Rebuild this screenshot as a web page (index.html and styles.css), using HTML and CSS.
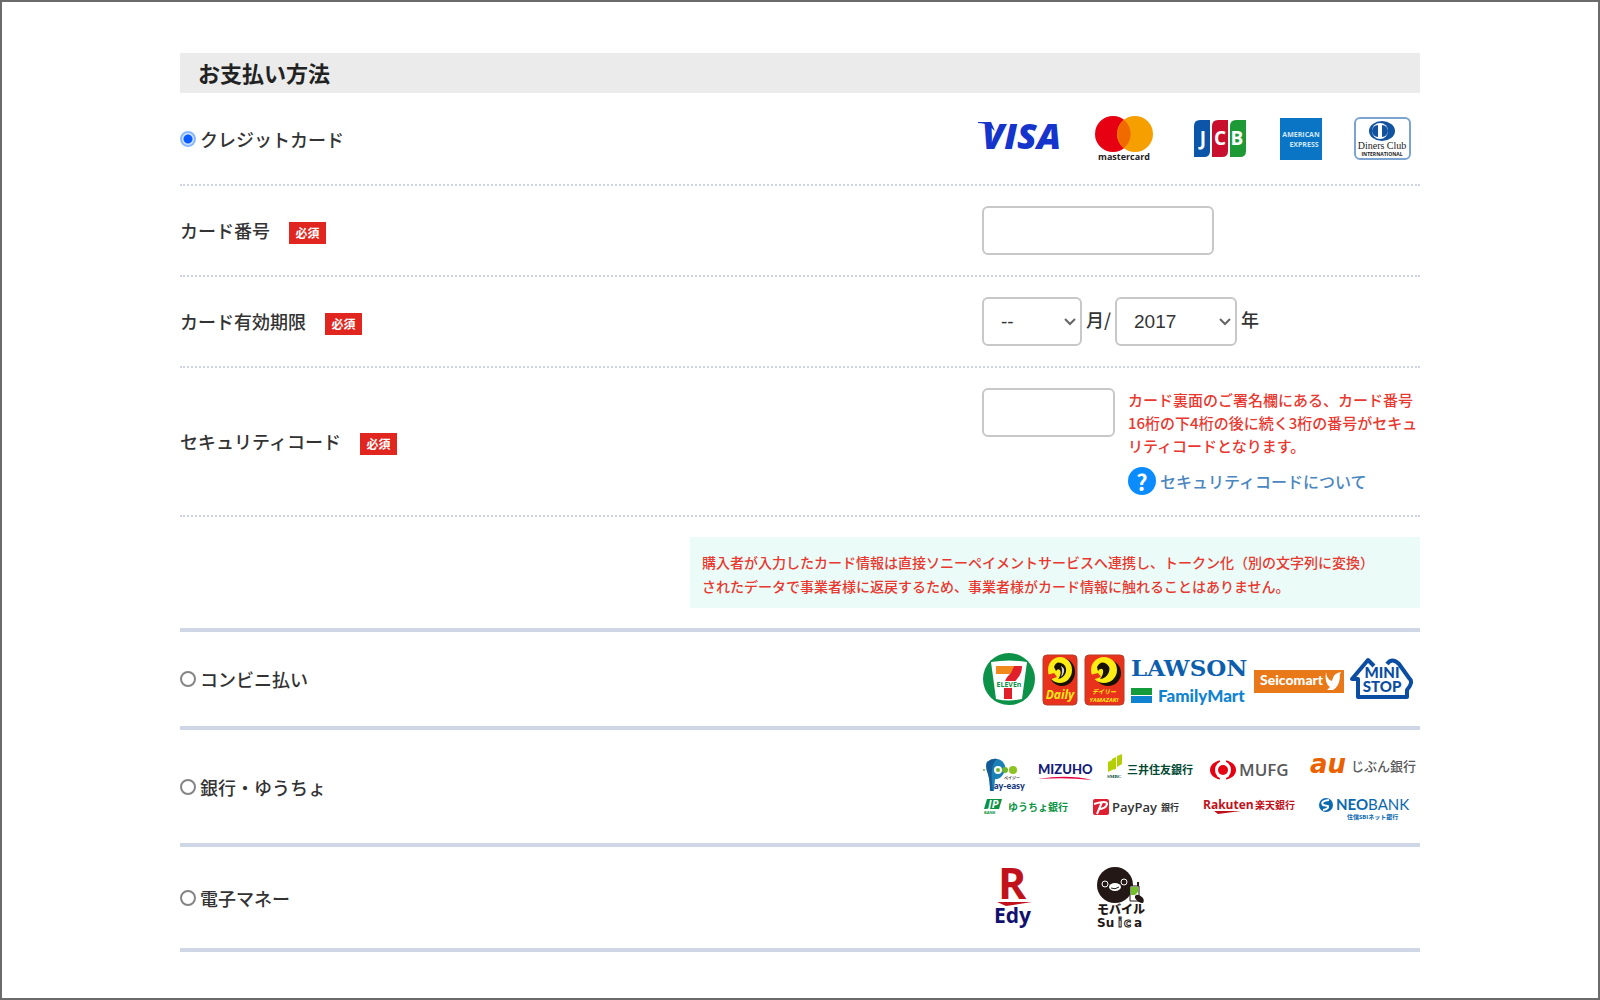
FILE: index.html
```html
<!DOCTYPE html>
<html lang="ja">
<head>
  <meta charset="UTF-8" />
  <meta name="viewport" content="width=device-width, initial-scale=1.0"/>
  <title>お支払い方法</title>
  <link rel="stylesheet" href="styles.css">
</head>
<body>

<form class="payment">
  <h1>お支払い方法</h1>

  <div class="row card-row">
    <label class="method"><input type="radio" name="method" value="card" checked />クレジットカード</label>
    <div class="field logos cards">
      <svg width="86" height="47" role="img" aria-label="VISA">
        <text x="5" y="34" class="visa">VISA</text>
        <path d="M1 7h13l4 9-6-5Q8 8 1 8z" fill="#1434cb"/>
      </svg>
      <svg width="67" height="47" role="img" aria-label="mastercard">
        <circle cx="18" cy="19" r="18" fill="#e60012"/>
        <circle cx="40" cy="19" r="18" fill="#f5a000"/>
        <path d="M29 5a18 18 0 0 1 0 28 18 18 0 0 1 0-28z" fill="#f06a00"/>
        <text x="29" y="45" class="mc">mastercard</text>
      </svg>
      <svg width="54" height="47" role="img" aria-label="JCB">
        <path d="M6 5h10v31q0 6-6 6H0V11q0-6 6-6z" fill="#0b56a8"/>
        <path d="M24 5h10v31q0 6-6 6H18V11q0-6 6-6z" fill="#c8102e"/>
        <path d="M42 5h10v31q0 6-6 6H36V11q0-6 6-6z" fill="#1d9a35"/>
        <text x="9" y="30" class="jcb">J</text>
        <text x="26" y="30" class="jcb">C</text>
        <text x="43" y="30" class="jcb">B</text>
      </svg>
      <svg width="42" height="47" role="img" aria-label="American Express">
        <path d="M0 3h42v42H0z" fill="#0a75c4"/>
        <text x="21" y="22" class="amex">AMERICAN</text>
        <text x="24" y="32" class="amex">EXPRESS</text>
      </svg>
      <svg width="58" height="47" role="img" aria-label="Diners Club International">
        <rect x="1" y="3" width="55" height="41" rx="5" fill="#fff" stroke="#7ba4d0" stroke-width="2"/>
        <ellipse cx="28" cy="16" rx="13" ry="10" fill="#12539f"/>
        <circle cx="26" cy="16" r="8" fill="#fff"/>
        <path d="M24 10v12a6 6 0 0 1 0-12zM28 10v12a6 6 0 0 0 0-12z" fill="#12539f"/>
        <text x="28" y="34" class="diners">Diners Club</text>
        <text x="28" y="41" class="diners-sub">INTERNATIONAL</text>
      </svg>
    </div>
  </div>

  <div class="row">
    <div class="name"><label for="cardNumber">カード番号</label><span class="required">必須</span></div>
    <div class="field"><input type="text" class="box number" id="cardNumber" /></div>
  </div>

  <div class="row">
    <div class="name"><label for="month">カード有効期限</label><span class="required">必須</span></div>
    <div class="field expiry">
      <select class="box month" id="month"><option>--</option></select>
      <span>月/</span>
      <select class="box year" id="year" aria-label="年"><option>2017</option></select>
      <span>年</span>
    </div>
  </div>

  <div class="row">
    <div class="name"><label for="code">セキュリティコード</label><span class="required">必須</span></div>
    <div class="field security">
      <input type="text" class="box code" id="code" />
      <div class="note">
        <p>カード裏面のご署名欄にある、カード番号<br>16桁の下4桁の後に続く3桁の番号がセキュ<br>リティコードとなります。</p>
        <a href="#"><span class="help">?</span>セキュリティコードについて</a>
      </div>
    </div>
  </div>

  <div class="row last notice-row">
    <p class="notice">購入者が入力したカード情報は直接ソニーペイメントサービスへ連携し、トークン化（別の文字列に変換）<br>されたデータで事業者様に返戻するため、事業者様がカード情報に触れることはありません。</p>
  </div>

  <div class="row last">
    <label class="method"><input type="radio" name="method" value="cvs" />コンビニ払い</label>
    <div class="field logos stores">
      <svg width="54" height="54" role="img" aria-label="7-ELEVEN">
        <circle cx="27" cy="27" r="26" fill="#0c9149"/>
        <path d="M9 10q18-3 36 0l-5 37q-13 3-26 0z" fill="#fff"/>
        <path d="M14 14h18l-2 8H14z" fill="#f08a1c"/>
        <path d="M32 14h8q0 8-5 13-4 5-5 7v13h-8V34q0-7 7-13z" fill="#e2202c"/>
        <path d="M13 29h28v7H13z" fill="#fff"/>
        <text x="27" y="35" class="seven">ELEVEn</text>
      </svg>
      <svg width="36" height="54" role="img" aria-label="Daily">
        <rect x="1" y="3" width="34" height="50" rx="4" fill="#e8321c" stroke="#b93a25"/>
        <ellipse cx="20" cy="20" rx="13" ry="14" fill="#171100"/>
        <ellipse cx="18" cy="18" rx="12" ry="13" fill="#fcec13"/>
        <path d="M5 23l7-2 3 4-8 3z" fill="#e8321c"/>
        <path d="M12 15q2-6 7-4 6 2 5 9-2 6-8 7 4-5 2-9-2-2-4 1z" fill="#171100"/>
        <path d="M19 14q4 2 3 6-1 4-3 5 2-6 0-11z" fill="#d9cfdc"/>
        <text x="18" y="47" class="daily">Daily</text>
      </svg>
      <svg width="41" height="54" role="img" aria-label="デイリーヤマザキ">
        <rect x="1" y="3" width="39" height="50" rx="4" fill="#e8321c" stroke="#b93a25"/>
        <ellipse cx="24" cy="21" rx="13" ry="13" fill="#171100"/>
        <ellipse cx="20" cy="18" rx="13" ry="13" fill="#fcec13"/>
        <path d="M6 23l8-2 3 4-9 3z" fill="#e8321c"/>
        <path d="M13 15q3-6 8-4 6 3 4 9-3 7-9 7 4-5 3-9-2-3-5 1z" fill="#171100"/>
        <text x="20" y="42" class="yamazaki">デイリー</text>
        <text x="20" y="50" class="yamazaki">YAMAZAKI</text>
      </svg>
      <svg width="117" height="54" role="img" aria-label="LAWSON FamilyMart">
        <text x="0" y="24" class="lawson">LAWSON</text>
        <path d="M0 36h21v7H0z" fill="#149c3c"/>
        <path d="M0 44h21v7H0z" fill="#0f83d0"/>
        <text x="27" y="50" class="family">FamilyMart</text>
      </svg>
      <svg width="90" height="54" role="img" aria-label="Seicomart">
        <path d="M0 18h90v23H0z" fill="#e97818"/>
        <text x="6" y="33" class="seico">Seicomart</text>
        <path d="M72 20q1 8 6 9 1-8 9-9-2 3-1 5-1 10-7 13h-6l3-3q-6-4-4-15z" fill="#fff"/>
      </svg>
      <svg width="66" height="54" role="img" aria-label="MINISTOP">
        <path d="M24 14l-6-6L2 27h6v18h49v-7q7-8 2-12L49 12q-7-7-12 0" fill="none" stroke="#0b4da2" stroke-width="4" stroke-linejoin="round"/>
        <text x="32" y="26" class="mini">MINI</text>
        <text x="32" y="40" class="mini">STOP</text>
      </svg>
    </div>
  </div>

  <div class="row last bank-row">
    <label class="method"><input type="radio" name="method" value="bank" />銀行・ゆうちょ</label>
    <div class="field">
      <div class="logos banks">
        <svg width="41" height="40" role="img" aria-label="Pay-easy">
          <path d="M5 9q8-6 15-1 7 7 0 15-3 4-7 3l-1 12H8Q8 28 6 21q-3-7-1-12z" fill="#1c82b5"/>
          <path d="M5 9q5-4 10-3-8 6-4 32H8Q8 27 6 21q-3-7-1-12z" fill="#145b96"/>
          <circle cx="16" cy="17" r="4" fill="#fff"/>
          <circle cx="2" cy="17" r="1" fill="#6fb52c"/><circle cx="16" cy="17" r="2" fill="#6fb52c"/>
          <circle cx="23" cy="17" r="3" fill="#6fb52c"/><circle cx="31" cy="17" r="4" fill="#8cc31f"/>
          <text x="22" y="27" class="pe-kana">ペイジー</text>
          <text x="12" y="36" class="payeasy">ay-easy</text>
        </svg>
        <svg width="54" height="40" role="img" aria-label="MIZUHO">
          <text x="0" y="21" class="mizuho">MIZUHO</text>
          <path d="M0 26q30-5 54 1-26-3-54-1z" fill="#e6003c"/>
        </svg>
        <svg width="88" height="40" role="img" aria-label="SMBC 三井住友銀行">
          <path d="M1 9l4-2v10l-4 2zM5 6l4-2v12l-4 1zM10 3l5-2v10l-5 3z" fill="#b4cf00"/>
          <text x="0" y="25" class="smbc-s">SMBC</text>
          <text x="20" y="21" class="smbc">三井住友銀行</text>
        </svg>
        <svg width="85" height="40" role="img" aria-label="MUFG">
          <ellipse cx="13" cy="17" rx="13" ry="10" fill="#e60012"/>
          <ellipse cx="13" cy="17" rx="8" ry="9" fill="#fff"/>
          <path d="M10 6h6v4h-6zM10 24h6v4h-6z" fill="#fff"/>
          <circle cx="13" cy="17" r="5" fill="#e60012"/>
          <text x="29" y="23" class="mufg">MUFG</text>
        </svg>
        <svg width="108" height="40" role="img" aria-label="auじぶん銀行">
          <text x="0" y="20" class="au">au</text>
          <text x="41" y="18" class="jibun">じぶん銀行</text>
        </svg>
      </div>
      <div class="logos banks-sub">
        <svg width="89" height="24" role="img" aria-label="ゆうちょ銀行">
          <path d="M5 2h15l-3 10H2z" fill="#0a9343"/>
          <text x="6" y="11" class="jp">JP</text>
          <text x="2" y="17" class="jp-s">BANK</text>
          <text x="26" y="14" class="yucho">ゆうちょ銀行</text>
        </svg>
        <svg width="88" height="24" role="img" aria-label="PayPay銀行">
          <rect x="0" y="2" width="16" height="16" rx="2" fill="#df1f32"/>
          <path d="M1 7q13-4 13 0-1 5-9 5M9 5L4 17" fill="none" stroke="#fff" stroke-width="2"/>
          <text x="19" y="15" class="paypay">PayPay</text>
          <text x="68" y="14" class="paypay-b">銀行</text>
        </svg>
        <svg width="94" height="24" role="img" aria-label="Rakuten 楽天銀行">
          <text x="0" y="12" class="rakuten">Rakuten</text>
          <text x="52" y="12" class="rakuten-b">楽天銀行</text>
          <path d="M11 14h27l-23 3z" fill="#c1121c"/>
        </svg>
        <svg width="92" height="24" role="img" aria-label="NEOBANK 住信SBIネット銀行">
          <circle cx="7" cy="8" r="7" fill="#0a68b1"/>
          <path d="M10 3q-9 1-6 5l5 1q1 3-5 4" fill="none" stroke="#fff" stroke-width="2"/>
          <text x="17" y="13" class="neo"><tspan class="neo-b">NEO</tspan>BANK</text>
          <text x="28" y="22" class="neo-s">住信SBIネット銀行</text>
        </svg>
      </div>
    </div>
  </div>

  <div class="row last">
    <label class="method"><input type="radio" name="method" value="emoney" />電子マネー</label>
    <div class="field logos emoney">
      <svg width="40" height="61" role="img" aria-label="楽天Edy">
        <text x="4" y="32" class="edy-r">R</text>
        <path d="M3 35h35l-26 4z" fill="#c1121c"/>
        <text x="0" y="56" class="edy">Edy</text>
      </svg>
      <svg width="50" height="61" role="img" aria-label="モバイルSuica">
        <circle cx="18" cy="18" r="18" fill="#231815"/>
        <circle cx="8" cy="17" r="3" fill="#231815" stroke="#fff"/><circle cx="27" cy="15" r="3" fill="#231815" stroke="#fff"/>
        <ellipse cx="18" cy="20" rx="6" ry="4" fill="#fff"/>
        <path d="M14 21q4 2 8-1" fill="none" stroke="#231815"/>
        <path d="M33 19h9v15h-9z" fill="#fff" stroke="#231815"/>
        <path d="M34 20h7v5l-3 3h-4z" fill="#72c12b"/>
        <path d="M40 15h2v4h-2zM38 29q2-3 7 1 3 3 1 6-5 0-8-5z" fill="#231815"/>
        <text x="0" y="47" class="mobile">モバイル</text>
        <text x="0" y="60" class="suica">Su</text>
        <text x="21" y="60" class="suica hollow">i</text>
        <text x="27" y="60" class="suica hollow">c</text>
        <text x="37" y="60" class="suica">a</text>
      </svg>
    </div>
  </div>
</form>

</body>
</html>
```
FILE: styles.css
```css
* { margin: 0; padding: 0; box-sizing: border-box; }
body {
  min-height: 100vh; border: 2px solid #6b6b6b; background: #fff;
  padding: 51px 178px 0; color: #333;
  font-family: "Noto Sans CJK JP", sans-serif; font-size: 18px; font-weight: 500; line-height: 24px;
}
h1 {
  height: 40px; padding-left: 18px; background: #ebebeb;
  font-size: 22px; font-weight: 700; line-height: 38px; color: #222;
}
.row {
  display: flex; align-items: center; justify-content: space-between;
  padding: 20px 0; border-bottom: 2px dotted #cdd3e3;
}
.row.last { border-bottom: 4px solid #cfd6e6; }
.card-row { padding: 22px 0; }
.notice-row { justify-content: flex-end; }
.bank-row { padding: 23px 0 22px; }
.field { width: 444px; padding-left: 6px; }

.method { display: flex; align-items: center; gap: 4px; }
.method input {
  appearance: none; width: 16px; height: 16px;
  border: 2px solid #858585; border-radius: 50%; background: #fff;
}
.method input:checked {
  border-color: #8bb9ff;
  background: radial-gradient(circle, #0a5cff 4px, #d5e6ff 5px);
}
.name { display: flex; align-items: center; gap: 19px; }
.name label { padding-bottom: 2px; }
.required {
  width: 37px; height: 22px; margin-top: 4px; background: #e0261f; color: #fff;
  font-size: 12px; font-weight: 700; line-height: 22px; text-align: center;
}

.box {
  display: block; height: 49px; border: 2px solid #c8c8c8; border-radius: 6px;
  background: #fff; color: #333; font-family: "Liberation Sans", Arial, sans-serif; font-size: 19px;
}
select.box {
  appearance: none; padding-left: 17px;
  background: url("data:image/svg+xml,%3Csvg xmlns='http://www.w3.org/2000/svg' width='12' height='8'%3E%3Cpath d='M1 1l5 5 5-5' fill='none' stroke='%23666' stroke-width='2'/%3E%3C/svg%3E") no-repeat right 4px center;
}
.number { width: 232px; }
.month { width: 100px; }
.year { width: 122px; }
.code { width: 133px; flex: none; }
.expiry { display: flex; align-items: center; gap: 4px; }
.expiry span { padding-bottom: 6px; }
.security { display: flex; align-items: flex-start; gap: 13px; }
.note { font-size: 15px; white-space: nowrap; }
.note p { color: #e8382f; line-height: 23px; }
.note a {
  display: flex; align-items: center; gap: 4px; height: 28px; margin-top: 10px;
  color: #4a86c0; font-size: 16px; text-decoration: none;
}
.help {
  width: 28px; height: 28px; border-radius: 50%; background: #0a8cff; color: #fff;
  font-size: 22px; font-weight: 700; line-height: 28px; text-align: center;
}
.notice {
  width: 730px; padding: 13px 12px 10px; background: #eafbf8;
  color: #e8382f; font-size: 14px; white-space: nowrap;
}

/* logos */
.logos { display: flex; }
.logos svg { display: block; flex: none; overflow: visible; }
.cards { padding-left: 1px; gap: 32px; }
.stores { gap: 6px; }
.banks { gap: 15px; }
.banks-sub { gap: 22px; margin-top: 4px; }
.emoney { padding-left: 18px; gap: 63px; }
.logos text { font-family: "Open Sans", "Noto Sans CJK JP", sans-serif; font-weight: 700; }
.logos .visa { font-size: 36px; font-style: italic; font-weight: 800; fill: #1434cb; }
.logos .mc { font-size: 9px; fill: #222; text-anchor: middle; }
.logos .jcb { font-size: 19px; fill: #fff; text-anchor: middle; }
.logos .amex { font-size: 7px; fill: #cfe6f7; text-anchor: middle; }
.logos .diners { font-family: "Liberation Serif", serif; font-size: 10px; font-weight: 400; fill: #222; text-anchor: middle; }
.logos .diners-sub { font-size: 5px; fill: #222; text-anchor: middle; }
.logos .seven { font-size: 7px; fill: #0c9149; text-anchor: middle; }
.logos .daily { font-size: 12px; font-style: italic; fill: #fcec13; text-anchor: middle; }
.logos .yamazaki { font-size: 6px; font-style: italic; fill: #fcec13; text-anchor: middle; }
.logos .lawson { font-family: "DejaVu Serif", serif; font-size: 23px; fill: #0d5fae; }
.logos .family { font-family: Lato, sans-serif; font-size: 17px; font-weight: 900; fill: #0f83d0; }
.logos .seico { font-family: Lato, sans-serif; font-size: 14px; font-weight: 900; fill: #fff; }
.logos .mini { font-family: Lato, sans-serif; font-size: 15px; font-weight: 900; fill: #0b4da2; text-anchor: middle; }
.logos .pe-kana { font-size: 4px; fill: #333; }
.logos .payeasy { font-family: Lato, sans-serif; font-size: 9px; font-weight: 900; fill: #12357c; }
.logos .mizuho { font-family: Lato, sans-serif; font-size: 13px; font-weight: 900; fill: #141e78; }
.logos .smbc-s { font-family: "Liberation Serif", serif; font-size: 5px; fill: #004831; }
.logos .smbc { font-size: 11px; fill: #004831; }
.logos .mufg { font-size: 17px; font-weight: 600; fill: #58595b; }
.logos .au { font-family: "DejaVu Sans", sans-serif; font-size: 26px; font-style: italic; fill: #eb6100; }
.logos .jibun { font-size: 13px; font-weight: 500; fill: #58595b; }
.logos .jp { font-size: 11px; font-style: italic; fill: #fff; }
.logos .jp-s { font-size: 4px; fill: #0a9343; }
.logos .yucho { font-size: 10px; fill: #0a9343; }
.logos .paypay { font-size: 13px; font-weight: 600; fill: #333; }
.logos .paypay-b { font-size: 9px; fill: #333; }
.logos .rakuten { font-size: 12px; fill: #c1121c; }
.logos .rakuten-b { font-size: 10px; fill: #c1121c; }
.logos .neo { font-family: Lato, sans-serif; font-size: 15px; font-weight: 400; fill: #0a68b1; }
.logos .neo-b { font-weight: 700; }
.logos .neo-s { font-size: 6px; fill: #0a68b1; }
.logos .edy-r { font-size: 43px; fill: #c1121c; }
.logos .edy { font-size: 21px; fill: #12106e; }
.logos .mobile { font-size: 12px; font-weight: 900; fill: #231815; }
.logos .suica { font-family: "DejaVu Sans", sans-serif; font-size: 12px; fill: #231815; }
.logos .hollow { fill: #fff; stroke: #231815; stroke-width: 1px; }
```
